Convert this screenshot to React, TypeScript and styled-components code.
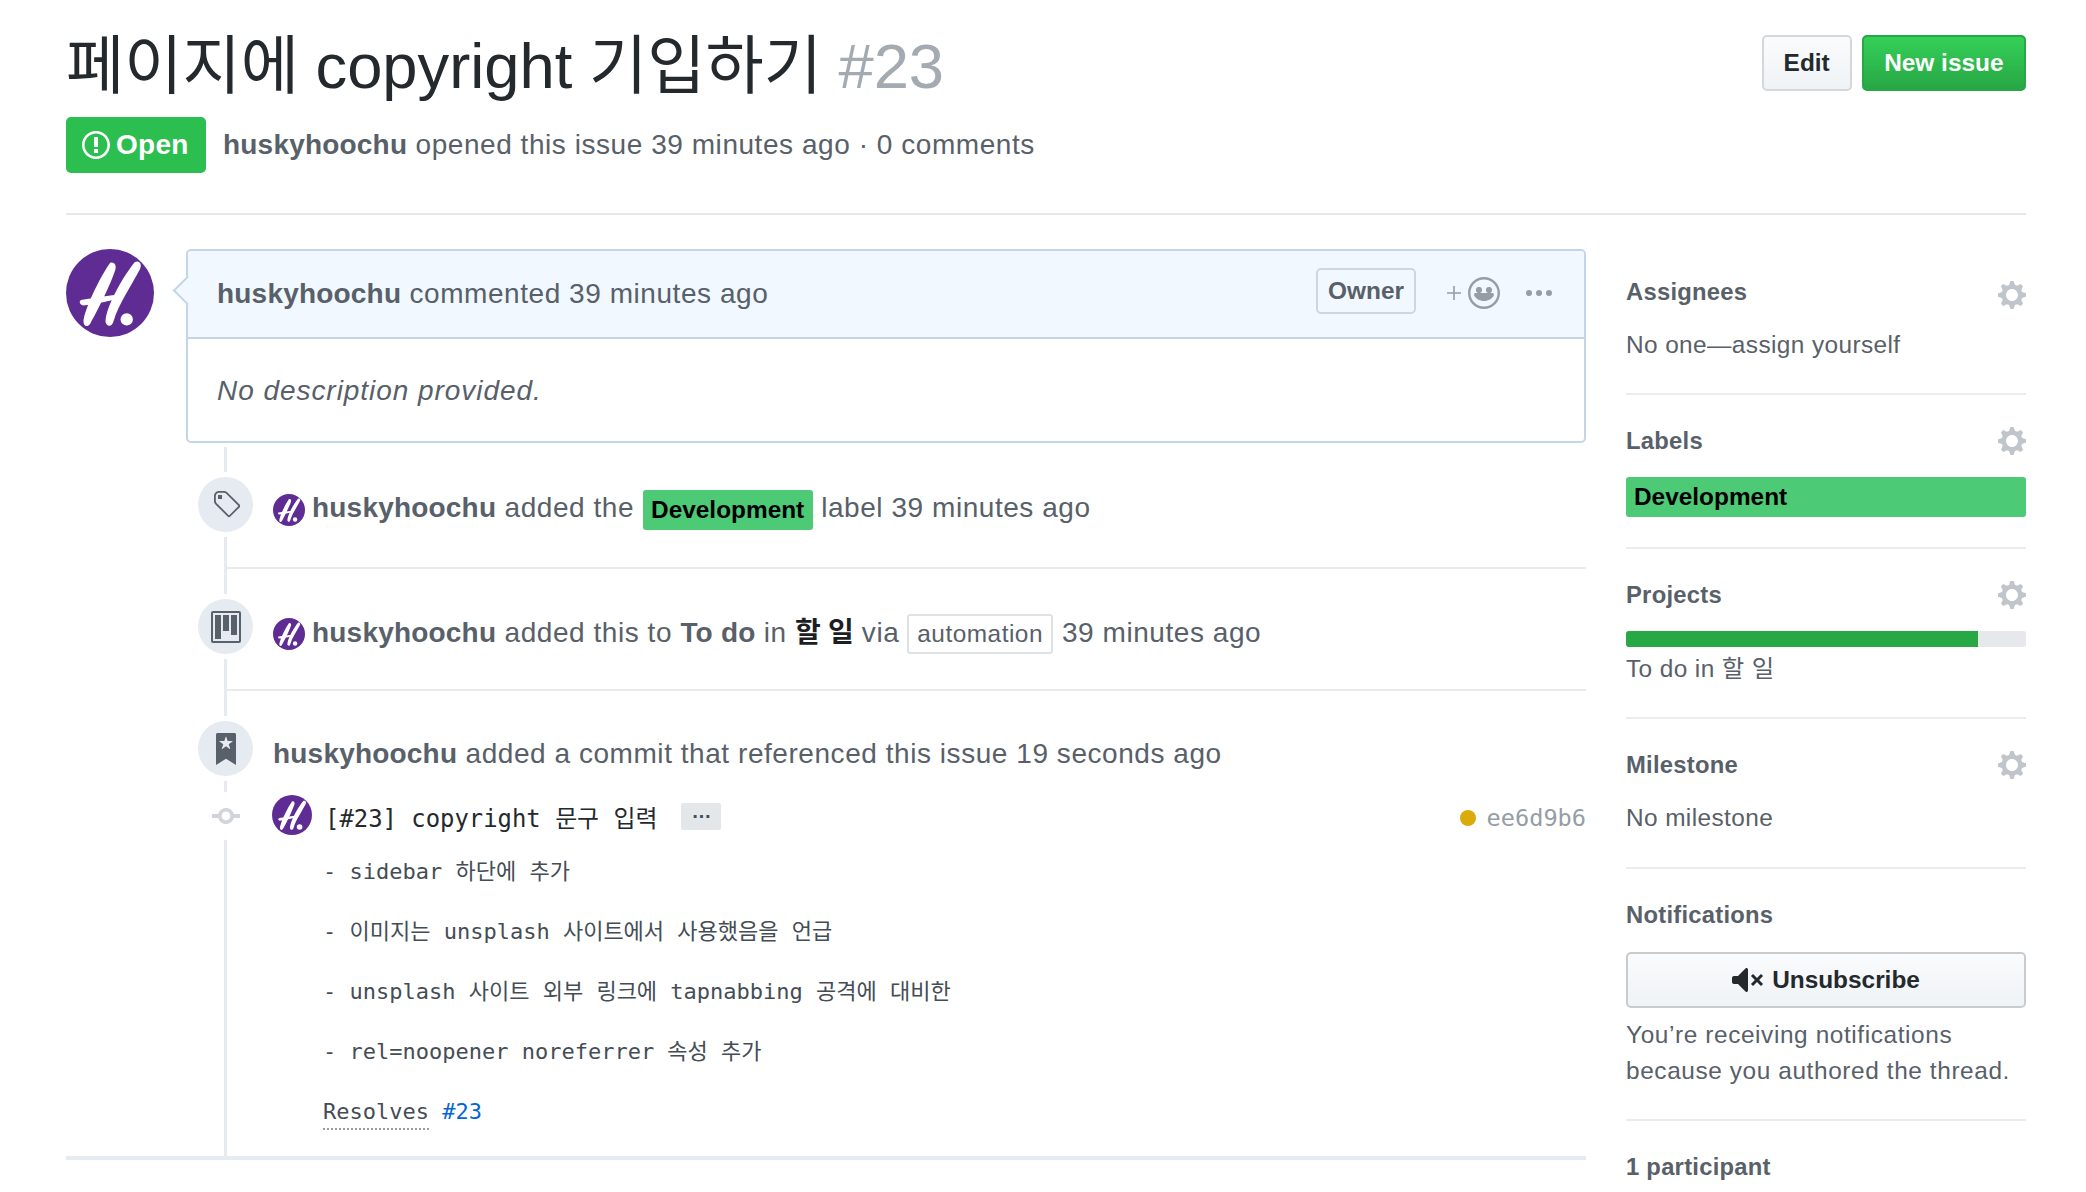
import { FunctionComponent } from "react";
import styled, { createGlobalStyle } from "styled-components";

const GlobalStyle = createGlobalStyle`
  html, body {
    margin: 0;
    background: #fff;
  }
  body {
    height: 1192px;
    overflow: hidden;
    color: #586069;
    font-family: "Liberation Sans", "Noto Sans CJK KR", sans-serif;
    font-size: 28px;
    letter-spacing: 0.55px;
  }
  strong {
    letter-spacing: 0.2px;
  }
`;

const Page = styled.div`
  padding: 0 60px 0 66px;
`;

const Header = styled.header`
  border-bottom: 2px solid #e6e8eb;
  height: 215px;
  box-sizing: border-box;
  padding-top: 22px;
`;

const TitleRow = styled.div`
  display: flex;
  justify-content: space-between;
  align-items: flex-start;
`;

const Title = styled.h1`
  margin: 0;
  color: #24292e;
  font-size: 63.3px;
  font-weight: 400;
  letter-spacing: 0;
  word-spacing: -1px;
  line-height: 88px;
  white-space: nowrap;
`;

const IssueNumber = styled.span`
  color: #a3aab1;
`;

const Actions = styled.div`
  display: flex;
  gap: 10px;
  margin-top: 13px;
`;

const Button = styled.button<{ $primary?: boolean }>`
  height: 56px;
  padding: 0 ${(p) => (p.$primary ? "20.5px" : "20px")};
  border: 2px solid ${(p) => (p.$primary ? "#28a745" : "#d5d8db")};
  border-radius: 5px;
  background: ${(p) =>
    p.$primary
      ? "linear-gradient(#34d058, #28a745)"
      : "linear-gradient(#fafbfc, #eff3f6)"};
  color: ${(p) => (p.$primary ? "#fff" : "#24292e")};
  font: bold 24.4px "Liberation Sans", sans-serif;
`;

const MetaRow = styled.div`
  display: flex;
  align-items: center;
  gap: 17px;
  margin-top: 7px;
  white-space: nowrap;
`;

const StateBadge = styled.span`
  display: flex;
  align-items: center;
  gap: 6px;
  box-sizing: border-box;
  width: 140px;
  height: 56px;
  padding-left: 16px;
  border-radius: 5px;
  background: #2cbe4e;
  color: #fff;
  font-weight: bold;
  letter-spacing: 0.3px;
`;

const Main = styled.main`
  display: flex;
  justify-content: space-between;
  align-items: flex-start;
`;

const Discussion = styled.section`
  display: flex;
  flex-direction: column;
  width: 1520px;
`;

const CommentRow = styled.div`
  display: flex;
  gap: 32px;
  margin-top: 34px;
`;

const CommentBox = styled.div`
  position: relative;
  flex: 1;
  height: 194px;
  box-sizing: border-box;
  border: 2px solid #c5d5e8;
  border-radius: 5px;
  &::before {
    content: "";
    position: absolute;
    left: -11px;
    top: 29px;
    width: 19px;
    height: 19px;
    border-left: 2px solid #c5d5e8;
    border-bottom: 2px solid #c5d5e8;
    background: #f1f8ff;
    transform: rotate(45deg);
  }
`;

const CommentHead = styled.div`
  display: flex;
  align-items: center;
  height: 86px;
  padding: 0 32px 0 29px;
  border-bottom: 2px solid #c5d5e8;
  background: #f1f8ff;
  border-radius: 4px 4px 0 0;
`;

const CommentHeadText = styled.span`
  flex: 1;
`;

const OwnerTag = styled.span`
  display: flex;
  align-items: center;
  justify-content: center;
  box-sizing: border-box;
  width: 100px;
  height: 46px;
  margin: 0 30px 6px 0;
  border: 2px solid #ced6e0;
  border-radius: 5px;
  font-size: 24.4px;
  font-weight: bold;
  letter-spacing: 0;
`;

const ReactionButton = styled.span`
  display: flex;
  align-items: center;
  gap: 6px;
  margin: 0 26px 3px 0;
  color: #959da5;
`;

const Kebab = styled.span`
  display: flex;
  margin-bottom: 3px;
  color: #959da5;
`;

const CommentBody = styled.p`
  margin: 0;
  padding: 0 29px;
  font-style: italic;
  letter-spacing: 0.95px;
  line-height: 104px;
`;

const Timeline = styled.div`
  margin: 4px 0 0 158px;
  border-left: 3px solid #e6ebf1;
`;

const Event = styled.div<{ $last?: boolean }>`
  display: flex;
  align-items: center;
  height: ${(p) => (p.$last ? "auto" : "55px")};
  padding: 30px 0 ${(p) => (p.$last ? "0" : "35px")};
  border-bottom: ${(p) => (p.$last ? "none" : "2px solid #e8ebee")};
`;

const EventBadge = styled.span`
  display: flex;
  flex: none;
  align-items: center;
  justify-content: center;
  width: 55px;
  height: 55px;
  margin-left: -29px;
  border-radius: 50%;
  background: #e6ebf1;
  box-shadow: 0 0 0 5px #fff;
  color: #586069;
`;

const EventText = styled.div`
  margin: 11px 0 0 20px;
  white-space: nowrap;
`;

const EventAvatar = styled.span`
  display: inline-flex;
  margin-right: 7px;
  vertical-align: middle;
`;

const InlineLabel = styled.span`
  display: inline-flex;
  align-items: center;
  height: 40px;
  margin: 0 8.5px;
  padding: 0 8.5px;
  border-radius: 3px;
  background: #4dca76;
  color: #000;
  font-size: 24.4px;
  font-weight: bold;
  letter-spacing: 0;
  vertical-align: middle;
`;

const ColumnName = styled.strong`
  color: #586069;
`;

const ProjectName = styled.strong`
  color: #1b1f23;
  letter-spacing: -0.3px;
`;

const ViaTag = styled.span`
  display: inline-flex;
  align-items: center;
  box-sizing: border-box;
  height: 40px;
  margin: 0 9px 0 8px;
  padding: 0 8px;
  border: 2px solid #dfe2e5;
  border-radius: 3px;
  font-size: 24.4px;
  letter-spacing: 0.5px;
  vertical-align: middle;
`;

const Commit = styled.div`
  display: flex;
  flex-direction: column;
  padding-bottom: 14px;
  border-bottom: 4px solid #e6ebf1;
  margin-left: -161px;
  font-family: "DejaVu Sans Mono", "Noto Sans CJK KR", monospace;
  letter-spacing: 0;
`;

const CommitHead = styled.div`
  display: flex;
  align-items: center;
  height: 42px;
  margin-top: 19px;
  padding-left: 146px;
`;

const CommitNode = styled.span`
  display: flex;
  flex: none;
  width: 28px;
  justify-content: center;
  margin-right: 32px;
  background: #fff;
  box-shadow: 0 -8px 0 #fff, 0 8px 0 #fff;
  color: #d1d5da;
`;

const CommitAvatar = styled.span`
  display: flex;
  margin-bottom: 3px;
`;

const CommitTitle = styled.span`
  margin-left: 13px;
  color: #24292e;
  font-size: 23.9px;
  white-space: pre;
`;

const EllipsisButton = styled.span`
  display: flex;
  align-items: center;
  justify-content: center;
  box-sizing: border-box;
  width: 40px;
  height: 27px;
  margin-left: 24px;
  padding-bottom: 9px;
  border-radius: 2px;
  background: #e4e7ea;
  color: #444d56;
  font: bold 20px "Liberation Sans", sans-serif;
`;

const CommitStatus = styled.span`
  display: flex;
  align-items: center;
  margin: 3px 0 0 auto;
  color: #959da5;
  font-size: 23.6px;
`;

const StatusDot = styled.i`
  width: 16px;
  height: 16px;
  margin-right: 11px;
  border-radius: 50%;
  background: #dbab09;
`;

const CommitMessage = styled.div`
  margin-top: 5px;
  padding-left: 257px;
  color: #444d56;
  font-size: 22px;
`;

const MessageLine = styled.p`
  margin: 0;
  height: 60px;
  line-height: 60px;
  white-space: pre;
`;

const Resolves = styled.span`
  border-bottom: 2px dotted #959da5;
  padding-bottom: 4px;
`;

const IssueRef = styled.span`
  color: #0366d6;
`;

const Sidebar = styled.aside`
  width: 400px;
  margin-top: 31px;
`;

const SidebarSection = styled.div<{ $bare?: boolean; $tall?: boolean }>`
  padding: 29px 0 ${(p) => (p.$tall ? "31px" : "30px")};
  border-bottom: ${(p) => (p.$bare ? "none" : "2px solid #eaecef")};
`;

const SectionHead = styled.div`
  display: flex;
  align-items: center;
  justify-content: space-between;
  box-sizing: border-box;
  height: 32px;
  margin-bottom: 20px;
  padding-top: 2px;
  font-size: 23.8px;
  font-weight: bold;
  letter-spacing: 0.25px;
`;

const Gear = styled.svg<{ $drop?: boolean }>`
  margin-top: ${(p) => (p.$drop ? "6px" : "0")};
  fill: #c0c5cc;
`;

const SidebarText = styled.div`
  font-size: 24.4px;
  letter-spacing: 0.4px;
  line-height: 36px;
`;

const NotificationNote = styled(SidebarText)`
  letter-spacing: 0.6px;
`;

const SidebarLabel = styled.div`
  display: flex;
  align-items: center;
  height: 40px;
  margin-top: 21px;
  padding-left: 8px;
  border-radius: 3px;
  background: #4dca76;
  color: #000;
  font-size: 24.4px;
  font-weight: bold;
  letter-spacing: 0;
`;

const ProgressTrack = styled.div`
  height: 16px;
  margin: 21px 0 4px;
  border-radius: 3px;
  background: #e6e8eb;
  overflow: hidden;
`;

const ProgressFill = styled.div`
  height: 100%;
  background: #28a745;
`;

const UnsubscribeButton = styled.button`
  display: flex;
  align-items: center;
  justify-content: center;
  gap: 8px;
  box-sizing: border-box;
  width: 100%;
  height: 56px;
  margin: 22px 0 9px;
  border: 2px solid #c9cccf;
  border-radius: 5px;
  background: linear-gradient(#fafbfc, #eff3f6);
  color: #24292e;
  font: bold 24.4px "Liberation Sans", sans-serif;
`;

const GEAR =
  "M14 8.77v-1.6l-1.94-.64-.45-1.09.88-1.84-1.13-1.13-1.81.91-1.09-.45-.69-1.92h-1.6l-.63 1.94-1.11.45-1.84-.88-1.13 1.13.91 1.81-.45 1.09L0 7.23v1.59l1.94.64.45 1.09-.88 1.84 1.13 1.13 1.81-.91 1.09.45.69 1.92h1.59l.63-1.94 1.11-.45 1.84.88 1.13-1.13-.92-1.81.47-1.09L14 8.75v.02zM7 11c-1.66 0-3-1.34-3-3s1.34-3 3-3 3 1.34 3 3-1.34 3-3 3z";

type IconProps = { width: number; height: number; box: string; d: string };

const Icon: FunctionComponent<IconProps> = ({ width, height, box, d }) => (
  <svg width={width} height={height} viewBox={box} fill="currentColor">
    <path fillRule="evenodd" d={d} />
  </svg>
);

const Avatar: FunctionComponent<{ size: number }> = ({ size }) => (
  <svg width={size} height={size} viewBox="0 0 100 100">
    <circle cx="50" cy="50" r="50" fill="#5f2c94" />
    <g fill="#fff">
      <path d="M50 16C54 14 58 18 56 24C50 42 36 70 28 84C25 90 19 88 20 80C24 62 40 30 50 16Z" />
      <path d="M78 15C83 12 87 17 84 23C74 42 60 62 54 82C52 90 44 88 45 80C48 60 66 30 78 15Z" />
      <path d="M17 58C30 56 50 52 64 52C60 58 36 62 22 64C16 65 14 60 17 58Z" />
      <circle cx="69" cy="80" r="7" />
    </g>
  </svg>
);

const SectionHeading: FunctionComponent<{
  title: string;
  gear?: boolean;
  drop?: boolean;
}> = ({ title, gear, drop }) => (
  <SectionHead>
    {title}
    {gear && (
      <Gear width="28" height="32" viewBox="0 0 14 16" $drop={drop}>
        <path fillRule="evenodd" d={GEAR} />
      </Gear>
    )}
  </SectionHead>
);

const App: FunctionComponent = () => (
  <Page>
    <GlobalStyle />
    <Header>
      <TitleRow>
        <Title>
          페이지에 copyright 기입하기 <IssueNumber>#23</IssueNumber>
        </Title>
        <Actions>
          <Button>Edit</Button>
          <Button $primary>New issue</Button>
        </Actions>
      </TitleRow>
      <MetaRow>
        <StateBadge>
          <Icon
            width={28}
            height={32}
            box="0 0 14 16"
            d="M7 2.3c3.14 0 5.7 2.56 5.7 5.7s-2.56 5.7-5.7 5.7A5.71 5.71 0 0 1 1.3 8c0-3.14 2.56-5.7 5.7-5.7zM7 1C3.14 1 0 4.14 0 8s3.14 7 7 7 7-3.14 7-7-3.14-7-7-7zm1 3H6v5h2V4zm0 6H6v2h2v-2z"
          />
          Open
        </StateBadge>
        <span>
          <strong>huskyhoochu</strong> opened this issue 39 minutes ago · 0
          comments
        </span>
      </MetaRow>
    </Header>
    <Main>
      <Discussion>
        <CommentRow>
          <Avatar size={88} />
          <CommentBox>
            <CommentHead>
              <CommentHeadText>
                <strong>huskyhoochu</strong> commented 39 minutes ago
              </CommentHeadText>
              <OwnerTag>Owner</OwnerTag>
              <ReactionButton>
                <svg width="16" height="16" viewBox="0 0 16 16">
                  <path d="M8 1v14M1 8h14" stroke="currentColor" strokeWidth="1.6" />
                </svg>
                <Icon
                  width={32}
                  height={32}
                  box="0 0 16 16"
                  d="M8 0C3.58 0 0 3.58 0 8s3.58 8 8 8 8-3.58 8-8-3.58-8-8-8zm4.81 12.81a6.72 6.72 0 0 1-2.17 1.45c-.83.36-1.72.53-2.64.53-.92 0-1.81-.17-2.64-.53-.81-.34-1.55-.83-2.17-1.45a6.773 6.773 0 0 1-1.45-2.17A6.59 6.59 0 0 1 1.21 8c0-.92.17-1.81.53-2.64.34-.81.83-1.55 1.45-2.17.62-.62 1.36-1.11 2.17-1.45A6.59 6.59 0 0 1 8 1.21c.92 0 1.81.17 2.64.53.81.34 1.55.83 2.17 1.45.62.62 1.11 1.36 1.45 2.17.36.83.53 1.72.53 2.64 0 .92-.17 1.81-.53 2.64-.34.81-.83 1.55-1.45 2.17zM4 6.8v-.59c0-.66.53-1.19 1.2-1.19h.59c.66 0 1.19.53 1.19 1.19v.59c0 .67-.53 1.2-1.19 1.2H5.2C4.53 8 4 7.47 4 6.8zm5 0v-.59c0-.66.53-1.19 1.2-1.19h.59c.66 0 1.19.53 1.19 1.19v.59c0 .67-.53 1.2-1.19 1.2h-.59C9.53 8 9 7.47 9 6.8zm4 2.2c-.72 1.88-2.91 3-5 3s-4.28-1.13-5-3c-.14-.39.23-1 .66-1h8.59c.39 0 .89.61.75 1z"
                />
              </ReactionButton>
              <Kebab>
                <Icon
                  width={26}
                  height={32}
                  box="0 0 13 16"
                  d="M1.5 9.5a1.5 1.5 0 1 0 0-3 1.5 1.5 0 0 0 0 3zm5 0a1.5 1.5 0 1 0 0-3 1.5 1.5 0 0 0 0 3zm5 0a1.5 1.5 0 1 0 0-3 1.5 1.5 0 0 0 0 3z"
                />
              </Kebab>
            </CommentHead>
            <CommentBody>No description provided.</CommentBody>
          </CommentBox>
        </CommentRow>
        <Timeline>
          <Event>
            <EventBadge>
              <Icon
                width={28}
                height={32}
                box="0 0 14 16"
                d="M7.73 1.73C7.26 1.26 6.62 1 5.96 1H3.5C2.13 1 1 2.13 1 3.5v2.47c0 .66.27 1.3.73 1.77l6.06 6.06c.39.39 1.02.39 1.41 0l4.59-4.59a.996.996 0 0 0 0-1.41L7.73 1.73zM2.38 7.09c-.31-.3-.47-.7-.47-1.13V3.5c0-.88.72-1.59 1.59-1.59h2.47c.42 0 .83.16 1.13.47l6.14 6.13-4.73 4.73-6.13-6.15zM3.01 3h2v2H3V3h.01z"
              />
            </EventBadge>
            <EventText>
              <EventAvatar>
                <Avatar size={32} />
              </EventAvatar>
              <strong>huskyhoochu</strong> added the
              <InlineLabel>Development</InlineLabel>label 39 minutes ago
            </EventText>
          </Event>
          <Event>
            <EventBadge>
              <Icon
                width={30}
                height={32}
                box="0 0 15 16"
                d="M10 12h3V2h-3v10zm-4-2h3V2H6v8zm-4 4h3V2H2v12zm-1 1h13V1H1v14zM14 0H1a1 1 0 0 0-1 1v14a1 1 0 0 0 1 1h13a1 1 0 0 0 1-1V1a1 1 0 0 0-1-1z"
              />
            </EventBadge>
            <EventText>
              <EventAvatar>
                <Avatar size={32} />
              </EventAvatar>
              <strong>huskyhoochu</strong> added this to{" "}
              <ColumnName>To do</ColumnName> in <ProjectName>할 일</ProjectName>{" "}
              via<ViaTag>automation</ViaTag>39 minutes ago
            </EventText>
          </Event>
          <Event $last>
            <EventBadge>
              <Icon
                width={20}
                height={32}
                box="0 0 10 16"
                d="M9 0H1C.27 0 0 .27 0 1v15l5-3.09L10 16V1c0-.73-.27-1-1-1zm-.78 4.25L6.36 5.61l.72 2.16c.06.22-.02.28-.2.17L5 6.6 3.12 7.94c-.19.11-.25.05-.2-.17l.72-2.16-1.86-1.36c-.17-.16-.14-.23.09-.23l2.3-.03.7-2.16h.25l.7 2.16 2.3.03c.23 0 .27.08.09.23h.01z"
              />
            </EventBadge>
            <EventText>
              <strong>huskyhoochu</strong> added a commit that referenced this
              issue 19 seconds ago
            </EventText>
          </Event>
          <Commit>
            <CommitHead>
              <CommitNode>
                <Icon
                  width={28}
                  height={32}
                  box="0 0 14 16"
                  d="M10.86 7c-.45-1.72-2-3-3.86-3-1.86 0-3.41 1.28-3.86 3H0v2h3.14c.45 1.72 2 3 3.86 3 1.86 0 3.41-1.28 3.86-3H14V7h-3.14zM7 10.2c-1.22 0-2.2-.98-2.2-2.2 0-1.22.98-2.2 2.2-2.2 1.22 0 2.2.98 2.2 2.2 0 1.22-.98 2.2-2.2 2.2z"
                />
              </CommitNode>
              <CommitAvatar>
                <Avatar size={40} />
              </CommitAvatar>
              <CommitTitle>[#23] copyright 문구 입력</CommitTitle>
              <EllipsisButton>…</EllipsisButton>
              <CommitStatus>
                <StatusDot />
                ee6d9b6
              </CommitStatus>
            </CommitHead>
            <CommitMessage>
              <MessageLine>- sidebar 하단에 추가</MessageLine>
              <MessageLine>- 이미지는 unsplash 사이트에서 사용했음을 언급</MessageLine>
              <MessageLine>- unsplash 사이트 외부 링크에 tapnabbing 공격에 대비한</MessageLine>
              <MessageLine>- rel=noopener noreferrer 속성 추가</MessageLine>
              <MessageLine>
                <Resolves>Resolves</Resolves> <IssueRef>#23</IssueRef>
              </MessageLine>
            </CommitMessage>
          </Commit>
        </Timeline>
      </Discussion>
      <Sidebar>
        <SidebarSection>
          <SectionHeading title="Assignees" gear drop />
          <SidebarText>No one—assign yourself</SidebarText>
        </SidebarSection>
        <SidebarSection>
          <SectionHeading title="Labels" gear />
          <SidebarLabel>Development</SidebarLabel>
        </SidebarSection>
        <SidebarSection>
          <SectionHeading title="Projects" gear />
          <ProgressTrack>
            <ProgressFill style={{ width: "88%" }} />
          </ProgressTrack>
          <SidebarText>To do in 할 일</SidebarText>
        </SidebarSection>
        <SidebarSection $tall>
          <SectionHeading title="Milestone" gear />
          <SidebarText>No milestone</SidebarText>
        </SidebarSection>
        <SidebarSection>
          <SectionHeading title="Notifications" />
          <UnsubscribeButton>
            <Icon
              width={32}
              height={32}
              box="0 0 16 16"
              d="M8 2.81v10.38c0 .67-.81 1-1.28.53L3 10H1c-.55 0-1-.45-1-1V7c0-.55.45-1 1-1h2l3.72-3.72C7.19 1.81 8 2.14 8 2.81zm7.53 3.22l-1.06-1.06-1.97 1.97-1.97-1.97-1.06 1.06L11.44 8 9.47 9.97l1.06 1.06 1.97-1.97 1.97 1.97 1.06-1.06L13.56 8l1.97-1.97z"
            />
            Unsubscribe
          </UnsubscribeButton>
          <NotificationNote>
            You’re receiving notifications
            <br />
            because you authored the thread.
          </NotificationNote>
        </SidebarSection>
        <SidebarSection $bare>
          <SectionHeading title="1 participant" />
        </SidebarSection>
      </Sidebar>
    </Main>
  </Page>
);

export default App;
